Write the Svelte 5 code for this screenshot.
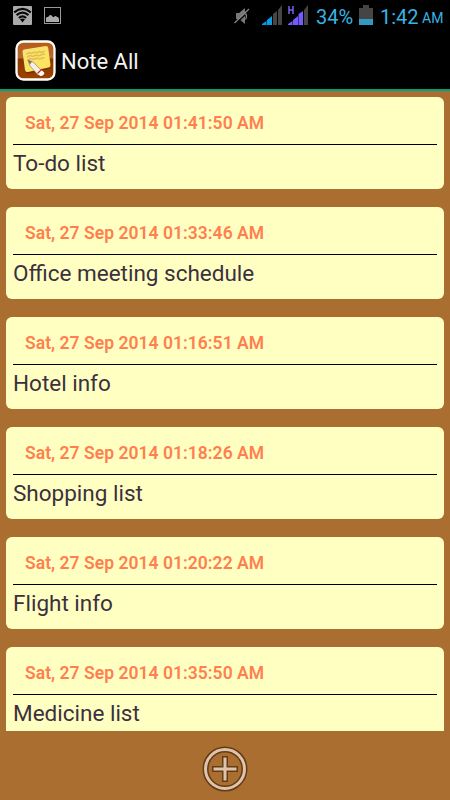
<script lang="ts">
interface Note {
  date: string;
  title: string;
}

const notes: Note[] = [
  { date: 'Sat, 27 Sep 2014 01:41:50 AM', title: 'To-do list' },
  { date: 'Sat, 27 Sep 2014 01:33:46 AM', title: 'Office meeting schedule' },
  { date: 'Sat, 27 Sep 2014 01:16:51 AM', title: 'Hotel info' },
  { date: 'Sat, 27 Sep 2014 01:18:26 AM', title: 'Shopping list' },
  { date: 'Sat, 27 Sep 2014 01:20:22 AM', title: 'Flight info' },
  { date: 'Sat, 27 Sep 2014 01:35:50 AM', title: 'Medicine list' },
];
</script>

<div class="screen">
  <div class="status">
    <svg class="wifi" width="19" height="19" viewBox="0 0 19 19">
      <rect width="19" height="19" rx="1" fill="#aaa" />
      <g fill="none" stroke="#080808" stroke-width="2.2">
        <path d="M1.200 6.300Q9.500-.5 17.800 6.300" />
        <path d="M3.600 9.200Q9.500 4 15.400 9.200" />
        <path d="M5.900 12Q9.500 8.700 13.100 12" />
      </g>
      <path d="M7 13.300Q9.500 11.600 12 13.300L9.500 16.500z" fill="#080808" />
    </svg>
    <svg class="picture" width="17" height="17" viewBox="0 0 17 17">
      <rect x=".5" y=".5" width="16" height="16" fill="none" stroke="#999" />
      <path d="M2 15v-4l1-1h1l2-2h1l2 2h1l1-1h1l1 1h1l1 2v3z" fill="#aaa" />
    </svg>
    <div class="spacer"></div>
    <svg class="mute" width="18" height="18" viewBox="0 0 18 18">
      <path d="M3 6h3l6-5v16l-6-5H3z" fill="#777" />
      <path d="M2.500 17L17 3" stroke="#000" stroke-width="1.500" />
      <path d="M1.500 16L16 2M12.500 6.500q2 2.500 0 6" fill="none" stroke="#858585" stroke-width="1.300" />
    </svg>
    <svg class="signal" width="21" height="20" viewBox="0 0 21 20">
      <path d="M0 20v-1l4.500-3v4zM5 20v-5l5-4v9z" fill="#079de5" />
      <path d="M11 20V9l4-3v14zM16 20V5l4-5v20z" fill="#454545" />
    </svg>
    <svg class="signal-h" width="21" height="20" viewBox="0 0 21 20">
      <path d="M1 1v8M5 1v8M1 5h4" fill="none" stroke="#7560ed" stroke-width="1.500" />
      <path d="M0 20v-1l4.500-3v4zM5 20v-5l5-4v9zM10.500 20V9l4.500-3v14z" fill="#735cff" />
      <path d="M16 20V5l4-5v20z" fill="#454545" />
    </svg>
    <span class="percent">34%</span>
    <svg class="battery" width="14" height="20" viewBox="0 0 14 20">
      <path d="M0 3h4V0h6v3h4v11H0z" fill="#454545" />
      <path d="M0 14h14v6H0z" fill="#3299c2" />
    </svg>
    <span class="clock">1:42</span>
    <span class="ampm">AM</span>
  </div>

  <header>
    <svg class="logo" width="42" height="42" viewBox="0 0 42 42">
      <defs>
        <linearGradient id="wood" x1="0" y1="0" x2="0" y2="1">
          <stop offset="0" stop-color="#b65b16" />
          <stop offset=".43" stop-color="#b76832" />
          <stop offset=".46" stop-color="#883700" />
          <stop offset="1" stop-color="#9e4200" />
        </linearGradient>
        <linearGradient id="paper" x1="0" y1="0" x2="1" y2="1">
          <stop offset="0" stop-color="#f8e17b" />
          <stop offset="1" stop-color="#ffe554" />
        </linearGradient>
      </defs>
      <rect x="1.500" y="1.500" width="38" height="38" rx="7" fill="url(#wood)" stroke="#fff" stroke-width="2.300" />
      <path d="M10 32l3 2 21-5 1-3z" fill="#602400" opacity=".5" />
      <path d="M9 9.500L31 6q2 0 2.200 2L35.500 25q0 2-2 2.500L13 32q-2.500.5-3-2L7.500 11.500Q7.500 9.800 9 9.500z" fill="url(#paper)" />
      <path d="M11.500 14l3-1.500 2 1 3-1.500 2 1 3-1.500 2 1 3-1.500M12 17l3-1.500 3 1 3-1.500 3 1 3-1.500 3-.5M12.500 20l3-1.500 3 1 3-1.500 3 1 5-1.500" fill="none" stroke="#d2ac42" stroke-width="1.500" opacity=".65" />
      <path d="M13 20l5 2 9 9-4 4-8-9z" fill="#f3efeb" stroke="#8d7449" stroke-width=".6" />
      <path d="M12.500 20l4.500 1.500-2 3z" fill="#86703e" />
      <path d="M22.500 34l4-4 3 3q-1 3-4 3z" fill="#fff" />
      <path d="M22.500 33.500l4.500-4.500" stroke="#cb2b12" stroke-width="1.300" />
    </svg>
    <h1>Note All</h1>
  </header>

  <main>
    {#each notes as note}
      <article class="note">
        <div class="date">{note.date}</div>
        <div class="title">{note.title}</div>
      </article>
    {/each}
  </main>

  <footer>
    <button aria-label="Add note">
      <svg width="46" height="46" viewBox="0 0 46 46" fill="none">
        <circle cx="23" cy="23" r="19.500" stroke="#633c16" stroke-width="6" />
        <circle cx="23" cy="23" r="19.500" stroke="#e0c3ab" stroke-width="3" />
        <path d="M23 10v26M10 23h26" stroke="#633c16" stroke-width="6" />
        <path d="M23 11.500v23M11.500 23h23" stroke="#e0c3ab" stroke-width="3" />
      </svg>
    </button>
  </footer>
</div>

<style>
  :global(body) {
    margin: 0;
    background: #aa6e30;
  }

  .screen {
    display: flex;
    flex-direction: column;
    width: 450px;
    height: 800px;
    overflow: hidden;
    background: #aa6e30;
    font-family: Roboto, sans-serif;
    white-space: nowrap;
  }

  .status {
    display: flex;
    flex: none;
    box-sizing: border-box;
    height: 32px;
    padding: 5px 7px 0 13px;
    background: #000;
    color: #37b4e2;
    line-height: 24px;
  }

  svg {
    display: block;
    flex: none;
  }

  .wifi {
    margin-top: 1px;
  }

  .picture {
    margin: 2px 0 0 12px;
  }

  .spacer {
    flex: 1;
  }

  .mute {
    margin: 2px 11px 0 0;
  }

  .signal {
    margin-right: 5px;
  }

  .signal-h {
    margin-right: 7px;
  }

  .percent {
    width: 37px;
    font-size: 20px;
  }

  .battery {
    margin: 0 7px 0 6px;
  }

  .clock {
    width: 38px;
    font-size: 20px;
  }

  .ampm {
    width: 21px;
    margin-left: 4px;
    padding-top: 1px;
    font-size: 14px;
  }

  header {
    display: flex;
    flex: none;
    align-items: center;
    box-sizing: border-box;
    height: 59px;
    padding: 0 14px 0 15px;
    border-bottom: 2px solid #00a17f;
    background: #000;
  }

  .logo {
    margin-top: 1px;
  }

  h1 {
    margin: 3px 0 0 4px;
    color: #f3f3f3;
    font-size: 22px;
    font-weight: 400;
    line-height: 28px;
  }

  main {
    display: flex;
    flex-direction: column;
    gap: 18px;
    box-sizing: border-box;
    height: 640px;
    padding: 6px 6px 0;
    overflow: hidden;
  }

  .note {
    flex: none;
    box-sizing: border-box;
    height: 92px;
    padding: 0 7px;
    border-radius: 6px;
    background: #ffffc2;
  }

  .date {
    box-sizing: border-box;
    height: 48px;
    padding: 14px 12px 0;
    border-bottom: 1px solid #000;
    color: #ff7f50;
    font-size: 17.5px;
    font-weight: 600;
    letter-spacing: 0.03px;
    line-height: 24px;
  }

  .title {
    padding-top: 4px;
    color: #3c3040;
    font-size: 22.5px;
    line-height: 28px;
  }

  footer {
    display: flex;
    flex: 1;
    align-items: center;
    justify-content: center;
    padding-top: 7px;
  }

  button {
    padding: 0;
    border: 0;
    background: none;
  }
</style>
